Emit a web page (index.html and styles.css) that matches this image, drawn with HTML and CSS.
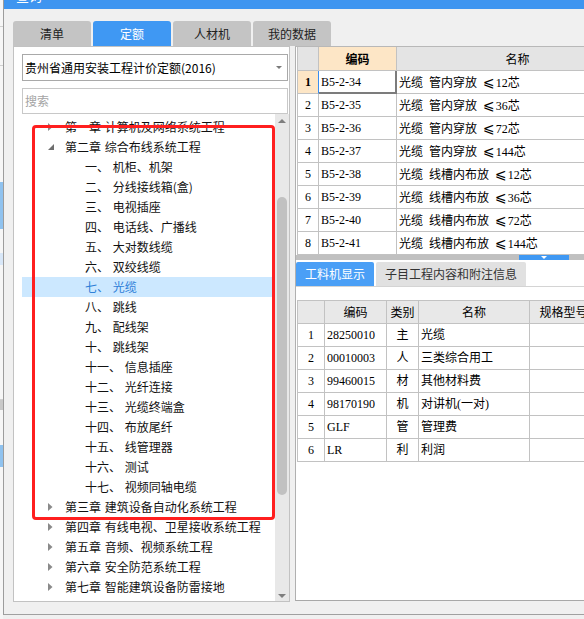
FILE: index.html
```html
<!DOCTYPE html>
<html>
<head>
<meta charset="utf-8">
<title>定额查询</title>
<link rel="stylesheet" href="styles.css">
</head>
<body>
<div class="screen">
  <div class="bgstrip">
    <div class="seg sg1"></div>
    <div class="seg sg2"></div>
    <div class="seg sg3"></div>
    <div class="seg sg4"></div>
    <div class="seg sg5"></div>
    <div class="seg sg6"></div>
    <div class="seg sg7"></div>
    <div class="seg sg8"></div>
    <div class="seg sg9"></div>
  </div>
  <div class="dialog">
    <div class="titlebar"><span class="title">查询</span></div>
    <div class="dbody">
      <div class="lcol">
        <div class="tabs">
          <div class="tab">清单</div>
          <div class="tab active">定额</div>
          <div class="tab">人材机</div>
          <div class="tab">我的数据</div>
        </div>
        <div class="lpanel">
          <div class="select"><span>贵州省通用安装工程计价定额(2016)</span><span class="caret"></span></div>
          <div class="search">搜索</div>
          <div class="treearea">
            <ul class="tree">
              <li class="row ch"><span class="arr"><svg width="5" height="8" viewBox="0 0 5 8"><path d="M0 0 L4.5 4 L0 8 Z" fill="#8a8a8a"/></svg></span>第一章 计算机及网络系统工程</li>
              <li class="row ch"><span class="arr"><svg width="7" height="7" viewBox="0 0 7 7"><path d="M6 0 L6 6 L0 6 Z" fill="#6e6e6e"/></svg></span>第二章 综合布线系统工程</li>
              <li class="row sub">一、 机柜、机架</li>
              <li class="row sub">二、 分线接线箱(盒)</li>
              <li class="row sub">三、 电视插座</li>
              <li class="row sub">四、 电话线、广播线</li>
              <li class="row sub">五、 大对数线缆</li>
              <li class="row sub">六、 双绞线缆</li>
              <li class="row sub sel">七、 光缆</li>
              <li class="row sub">八、 跳线</li>
              <li class="row sub">九、 配线架</li>
              <li class="row sub">十、 跳线架</li>
              <li class="row sub">十一、 信息插座</li>
              <li class="row sub">十二、 光纤连接</li>
              <li class="row sub">十三、 光缆终端盒</li>
              <li class="row sub">十四、 布放尾纤</li>
              <li class="row sub">十五、 线管理器</li>
              <li class="row sub">十六、 测试</li>
              <li class="row sub">十七、 视频同轴电缆</li>
              <li class="row ch"><span class="arr"><svg width="5" height="8" viewBox="0 0 5 8"><path d="M0 0 L4.5 4 L0 8 Z" fill="#8a8a8a"/></svg></span>第三章 建筑设备自动化系统工程</li>
              <li class="row ch"><span class="arr"><svg width="5" height="8" viewBox="0 0 5 8"><path d="M0 0 L4.5 4 L0 8 Z" fill="#8a8a8a"/></svg></span>第四章 有线电视、卫星接收系统工程</li>
              <li class="row ch"><span class="arr"><svg width="5" height="8" viewBox="0 0 5 8"><path d="M0 0 L4.5 4 L0 8 Z" fill="#8a8a8a"/></svg></span>第五章 音频、视频系统工程</li>
              <li class="row ch"><span class="arr"><svg width="5" height="8" viewBox="0 0 5 8"><path d="M0 0 L4.5 4 L0 8 Z" fill="#8a8a8a"/></svg></span>第六章 安全防范系统工程</li>
              <li class="row ch"><span class="arr"><svg width="5" height="8" viewBox="0 0 5 8"><path d="M0 0 L4.5 4 L0 8 Z" fill="#8a8a8a"/></svg></span>第七章 智能建筑设备防雷接地</li>
            </ul>
            <div class="vscroll">
              <span class="sarrow up"></span>
              <span class="thumb"></span>
              <span class="sarrow down"></span>
            </div>
          </div>
          <div class="redbox"></div>
        </div>
      </div>
      <div class="rcol">
        <div class="grid g1">
          <div class="r hd"><div class="c no"></div><div class="c code hl">编码</div><div class="c name">名称</div></div>
          <div class="r"><div class="c no sel">1</div><div class="c code cur">B5-2-34</div><div class="c name">光缆&ensp;管内穿放&ensp;<span class="le">⩽</span>12芯</div></div>
          <div class="r"><div class="c no">2</div><div class="c code">B5-2-35</div><div class="c name">光缆&ensp;管内穿放&ensp;<span class="le">⩽</span>36芯</div></div>
          <div class="r"><div class="c no">3</div><div class="c code">B5-2-36</div><div class="c name">光缆&ensp;管内穿放&ensp;<span class="le">⩽</span>72芯</div></div>
          <div class="r"><div class="c no">4</div><div class="c code">B5-2-37</div><div class="c name">光缆&ensp;管内穿放&ensp;<span class="le">⩽</span>144芯</div></div>
          <div class="r"><div class="c no">5</div><div class="c code">B5-2-38</div><div class="c name">光缆&ensp;线槽内布放&ensp;<span class="le">⩽</span>12芯</div></div>
          <div class="r"><div class="c no">6</div><div class="c code">B5-2-39</div><div class="c name">光缆&ensp;线槽内布放&ensp;<span class="le">⩽</span>36芯</div></div>
          <div class="r"><div class="c no">7</div><div class="c code">B5-2-40</div><div class="c name">光缆&ensp;线槽内布放&ensp;<span class="le">⩽</span>72芯</div></div>
          <div class="r"><div class="c no">8</div><div class="c code">B5-2-41</div><div class="c name">光缆&ensp;线槽内布放&ensp;<span class="le">⩽</span>144芯</div></div>
        </div>
        <div class="splitter"><span class="knob"><span class="tri"></span></span></div>
        <div class="btabs">
          <div class="btab active">工料机显示</div>
          <div class="btab wide">子目工程内容和附注信息</div>
        </div>
        <div class="grid g2">
          <div class="r hd"><div class="c no"></div><div class="c code">编码</div><div class="c kind">类别</div><div class="c name">名称</div><div class="c spec">规格型号</div></div>
          <div class="r"><div class="c no">1</div><div class="c code">28250010</div><div class="c kind">主</div><div class="c name">光缆</div><div class="c spec"></div></div>
          <div class="r"><div class="c no">2</div><div class="c code">00010003</div><div class="c kind">人</div><div class="c name">三类综合用工</div><div class="c spec"></div></div>
          <div class="r"><div class="c no">3</div><div class="c code">99460015</div><div class="c kind">材</div><div class="c name">其他材料费</div><div class="c spec"></div></div>
          <div class="r"><div class="c no">4</div><div class="c code">98170190</div><div class="c kind">机</div><div class="c name">对讲机(一对)</div><div class="c spec"></div></div>
          <div class="r"><div class="c no">5</div><div class="c code">GLF</div><div class="c kind">管</div><div class="c name">管理费</div><div class="c spec"></div></div>
          <div class="r"><div class="c no">6</div><div class="c code">LR</div><div class="c kind">利</div><div class="c name">利润</div><div class="c spec"></div></div>
        </div>
      </div>
    </div>
  </div>
</div>
</body>
</html>
```
FILE: styles.css
```css
* { box-sizing: border-box; }
html, body { margin: 0; padding: 0; }
body {
  width: 584px;
  height: 619px;
  overflow: hidden;
  background: #f0f0f0;
  font-family: "Noto Sans CJK SC", "Noto Sans", sans-serif;
  font-size: 12px;
  color: #111;
}
.screen { display: flex; height: 619px; }

/* background window peeking at the left edge */
.bgstrip { width: 3px; flex: none; display: flex; flex-direction: column; background: #f6f6f6; }
.seg { flex: none; }
.sg1 { height: 27px; border-bottom: 1px solid #d0d0d0; }
.sg2 { height: 39px; border-bottom: 1px solid #d0d0d0; }
.sg3 { height: 116px; }
.sg4 { height: 47px; background: #8fc2ef; }
.sg5 { height: 24px; }
.sg6 { height: 12px; background: #d8e7f8; }
.sg7 { height: 135px; border-bottom: 1px solid #d0d0d0; }
.sg8 { height: 10px; background: #c8c8c8; margin-bottom: 35px; }
.sg9 { height: 22px; background: #8fc2ef; }

.dialog {
  flex: 1;
  min-width: 0;
  height: 615px;
  border-left: 1px solid #9c9c9c;
  border-bottom: 1px solid #a0a0a0;
  background: #f0f0f0;
  display: flex;
  flex-direction: column;
}
.titlebar { height: 9px; flex: none; background: #3e95f0; overflow: hidden; padding-left: 12px; }
.title { display: block; color: #fff; font-size: 13px; line-height: 13px; margin-top: -11px; }

.dbody { display: flex; gap: 5px; padding: 12px 0 0 9px; flex: 1; min-height: 0; }

/* left column */
.lcol { width: 277px; flex: none; display: flex; flex-direction: column; }
.tabs { display: flex; gap: 2px; height: 25px; flex: none; }
.tab {
  flex: none;
  width: 78px;
  height: 25px;
  background: #c4c4c4;
  border-radius: 3px 3px 0 0;
  text-align: center;
  line-height: 25px;
  color: #222;
}
.tab.active { background: #3f98f3; color: #fff; }

.lpanel {
  position: relative;
  height: 556px;
  flex: none;
  border: 1px solid #c2c2c2;
  background: #fff;
  padding: 7px 0 0 8px;
  display: flex;
  flex-direction: column;
}
.select {
  width: 266px;
  height: 27px;
  flex: none;
  border: 1px solid #a9a9a9;
  display: flex;
  align-items: center;
  justify-content: space-between;
  padding: 0 5px 0 2px;
  color: #000;
}
.caret {
  width: 0; height: 0;
  border-left: 3px solid transparent;
  border-right: 3px solid transparent;
  border-top: 3px solid #7a7a7a;
}
.search {
  width: 266px;
  height: 26px;
  flex: none;
  margin-top: 7px;
  border: 1px solid #c8c8c8;
  padding-left: 2px;
  line-height: 24px;
  color: #a4a4a4;
}
.treearea { flex: 1; min-height: 0; display: flex; }
.tree {
  list-style: none;
  margin: 0;
  padding: 3px 0 0;
  width: 253px;
  flex: none;
  overflow: hidden;
}
.row {
  height: 20px;
  line-height: 20px;
  white-space: nowrap;
  word-spacing: 1px;
  display: flex;
  align-items: center;
  color: #111;
}
.row.ch { padding-left: 26px; }
.row.sub { padding-left: 63px; }
.row.sel { background: #cce8ff; color: #2f80d8; }
.arr { width: 17px; flex: none; display: flex; align-items: center; }
.arr svg { display: block; }

.vscroll {
  width: 14px;
  flex: none;
  background: #e8e8e8;
  position: relative;
  display: flex;
  flex-direction: column;
  align-items: center;
}
.sarrow {
  width: 0; height: 0;
  border-left: 4px solid transparent;
  border-right: 4px solid transparent;
}
.sarrow.up { border-bottom: 4px solid #7e7e7e; margin-top: 5px; }
.sarrow.down { border-top: 4px solid #7e7e7e; margin-top: auto; margin-bottom: 3px; }
.thumb {
  width: 10px;
  height: 298px;
  margin-top: 74px;
  background: #c1c1c1;
  border-radius: 5px;
}

.redbox {
  position: absolute;
  left: 18px;
  top: 78px;
  width: 243px;
  height: 395px;
  border: 3px solid #ff1f1f;
  border-radius: 4px;
  pointer-events: none;
}

/* right column */
.rcol {
  flex: 1;
  min-width: 0;
  margin-top: 25px;
  height: 555px;
  border-top: 1px solid #b8b8b8;
  border-left: 1px solid #b0b0b0;
  border-bottom: 1px solid #a8a8a8;
  background: #fff;
  overflow: hidden;
  display: flex;
  flex-direction: column;
}
.grid {
  margin-left: 1px;
  border-left: 1px solid #c2c2c2;
  font-family: "Liberation Serif", "Noto Sans CJK SC", "DejaVu Sans", serif;
  flex: none;
}
.r { display: flex; height: 23px; }
.c {
  flex: none;
  height: 100%;
  border-right: 1px solid #c2c2c2;
  border-bottom: 1px solid #c2c2c2;
  padding: 0 2px;
  line-height: 22px;
  white-space: nowrap;
  overflow: hidden;
  color: #000;
}
.le { font-family: "DejaVu Sans", sans-serif; font-size: 14px; margin-right: 1px; }
.hd .c { background: #e4e4e4; text-align: center; font-family: "Noto Sans CJK SC", sans-serif; }
.c.no { text-align: center; padding: 0; }

.g1 .hd { height: 24px; }
.g1 .hd .c { line-height: 23px; }
.g1 .no { width: 21px; }
.g1 .code { width: 78px; }
.g1 .name { width: 242px; }
.g1 .hd .hl { background: #fde6c6; font-weight: bold; }
.g1 .no.sel { background: #fde6c6; font-weight: bold; border-right-color: #3a8ef0; }
.g1 .code.cur { border-right: 2px solid #7c7c7c; border-bottom: 2px solid #7c7c7c; }

.splitter {
  height: 5px;
  flex: none;
  background: #c0c0c0;
  padding-left: 223px;
  display: flex;
}
.knob {
  width: 50px;
  height: 5px;
  background: #3f98f3;
  display: flex;
  justify-content: center;
  align-items: center;
}
.tri {
  width: 0; height: 0;
  border-left: 3px solid transparent;
  border-right: 3px solid transparent;
  border-top: 3px solid #fff;
}

.btabs {
  display: flex;
  gap: 2px;
  height: 25px;
  margin-top: 2px;
  flex: none;
  border-bottom: 1px solid #d4d4d4;
}
.btab {
  width: 78px;
  height: 24px;
  flex: none;
  background: #e1e1e1;
  border-radius: 2px 2px 0 0;
  text-align: center;
  line-height: 24px;
  color: #333;
  font-size: 12px;
}
.btab.active { background: #4a9ff6; color: #fff; }
.btab.wide { width: 150px; }

.g2 { margin-top: 13px; border-top: 1px solid #c2c2c2; }
.g2 .no { width: 27px; }
.g2 .code { width: 62px; }
.g2 .kind { width: 32px; text-align: center; }
.g2 .name { width: 111px; }
.g2 .spec { width: 68px; }
.g2 .hd .c { background: #e8e8e8; }
```
